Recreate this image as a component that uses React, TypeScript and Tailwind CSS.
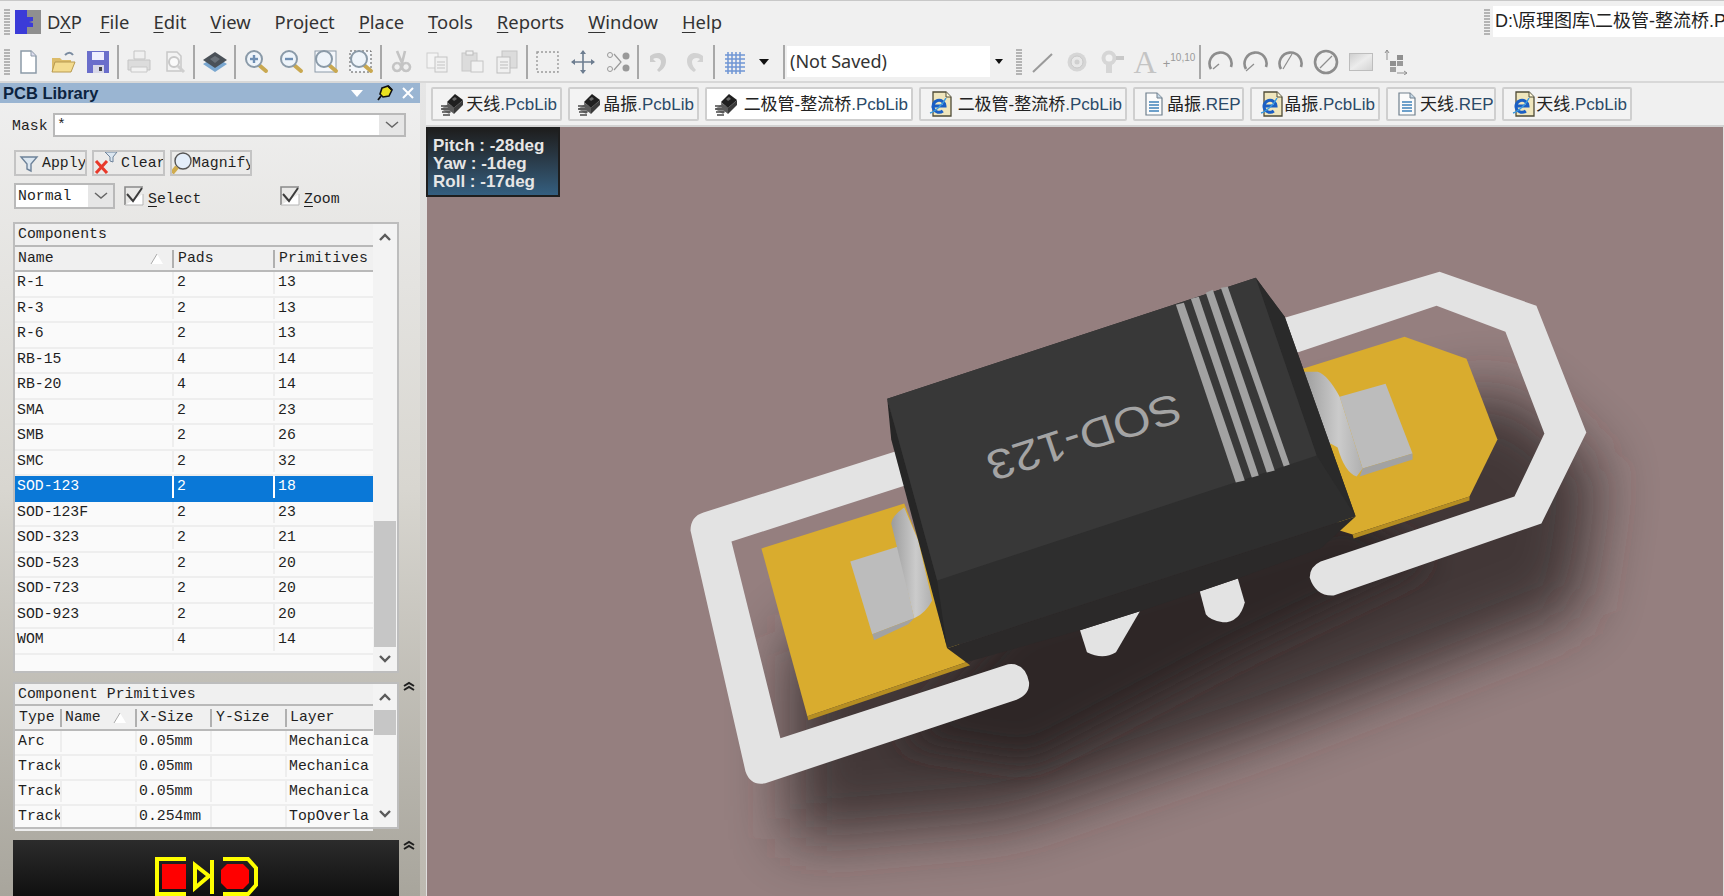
import React from 'react';

const MONO = "font-['Liberation_Mono',monospace] text-[14.8px] leading-none text-[#1f1f1f]";

const Grip = () => (
  <div className="w-[6px] h-[26px] flex flex-col gap-[1px] shrink-0">
    {Array.from({ length: 9 }).map((_, i) => (
      <div key={i} className="h-[2px] bg-[#b4b4b4]" />
    ))}
  </div>
);

const Sep = () => <div className="w-[2px] h-[34px] bg-[#a8a8a8] shrink-0 mx-[2px]" />;

const Ico: React.FC<{ children: React.ReactNode }> = ({ children }) => (
  <svg width="26" height="26" viewBox="0 0 26 26" className="shrink-0">
    {children}
  </svg>
);

const Slot: React.FC<{ children: React.ReactNode }> = ({ children }) => (
  <div className="w-[35px] h-[30px] flex items-center justify-center shrink-0">{children}</div>
);

const Glass: React.FC<{ sign?: 'plus' | 'minus' }> = ({ sign }) => (
  <g>
    <path d="M16 16l7 6" stroke="#c9a850" strokeWidth="4" strokeLinecap="round" />
    <circle cx="11" cy="10" r="8" fill="#eef4fa" stroke="#8a9aa8" strokeWidth="2" />
    {sign && <path d="M7 10h8" stroke="#6f8fb4" strokeWidth="2.4" />}
    {sign === 'plus' && <path d="M11 6v8" stroke="#6f8fb4" strokeWidth="2.4" />}
  </g>
);

const PageGray = () => <path d="M6 3h10l4 4v15H6z" fill="#f3f3f3" stroke="#c8c8c8" strokeWidth="1.5" />;

const ChipIcon = () => (
  <svg width="26" height="26" viewBox="0 0 26 26" className="shrink-0">
    <path d="M2 18l7-5 8 4-7 6z" fill="#8a8a8a" />
    <path d="M2 15h8M2 18h9M3 21h8M4 24h7" stroke="#4a4a4a" strokeWidth="1.5" />
    <path d="M8 11l8-8 8 6-9 8z" fill="#1f1f1f" />
    <path d="M8 11l7 6v6l-6-5z" fill="#5a5a5a" />
    <path d="M15 17l9-8v5l-9 9z" fill="#3a3a3a" />
    <path d="M13 8l3-2 2 2-3 2z" fill="#6a6a6a" />
  </svg>
);

const DocIcon = () => (
  <svg width="26" height="26" viewBox="0 0 26 26" className="shrink-0">
    <path d="M5 2h11l5 5v17H5z" fill="#fbfbfb" stroke="#70808e" strokeWidth="1.2" />
    <path d="M8 11h10M8 14h10M8 17h10M8 20h10" stroke="#3f83bb" strokeWidth="1.4" />
    <path d="M16 2v5h5" fill="#c6d8e6" stroke="#70808e" />
  </svg>
);

const IeIcon = () => (
  <svg width="26" height="26" viewBox="0 0 26 26" className="shrink-0">
    <path d="M6 1h13l5 5v19H6z" fill="#efe6bd" stroke="#4f4c38" strokeWidth="1.3" />
    <path d="M19 1v5h5" fill="#fff8d8" stroke="#4f4c38" />
    <path d="M7 15h11a6 6 0 1 0 -2.2 5" fill="none" stroke="#1b5fc4" strokeWidth="3" />
    <path d="M3 22c4-1 13-8 16-15" stroke="#3a9be0" strokeWidth="1.4" fill="none" />
  </svg>
);

const Tab: React.FC<{ icon: React.ReactNode; name: string; ext: string; active?: boolean; w: string }> = ({ icon, name, ext, active, w }) => (
  <div className={`${w} h-[34px] flex items-center justify-between pl-[6px] pr-[3px] rounded-[2px] border-2 border-[#cfcfcf] shrink-0 ${active ? 'bg-white' : 'bg-[#f3f3f3]'}`}>
    {icon}
    <span className="mt-[2px] font-['Liberation_Sans','Noto_Sans_CJK_SC',sans-serif] text-[17px] text-[#222] whitespace-nowrap">
      {name}
      <span className="text-[#2c4a68]">{ext}</span>
    </span>
  </div>
);

const U: React.FC<{ children: React.ReactNode }> = ({ children }) => (
  <span className="underline underline-offset-[3px]">{children}</span>
);

const Chevron: React.FC<{ down?: boolean }> = ({ down }) => (
  <svg width="14" height="10" viewBox="0 0 14 10">
    <path d={down ? 'M2 2l5 5 5-5' : 'M2 8l5-5 5 5'} fill="none" stroke="#5a5a5a" strokeWidth="2.4" />
  </svg>
);

const DoubleUp = () => (
  <svg width="14" height="11" viewBox="0 0 14 11">
    <path d="M2 5l5-3 5 3M2 9l5-3 5 3" fill="none" stroke="#1f1f1f" strokeWidth="2" />
  </svg>
);

const Combo: React.FC<{ w: string }> = ({ w }) => (
  <div className={`${w} h-full bg-[#e6e6e6] flex items-center justify-center shrink-0`}>
    <svg width="14" height="8" viewBox="0 0 14 8">
      <path d="M1 1l6 5 6-5" fill="none" stroke="#666" strokeWidth="1.5" />
    </svg>
  </div>
);

const Check = () => (
  <svg width="20" height="20" viewBox="0 0 20 20" className="shrink-0">
    <path d="M1 19V1h18" fill="none" stroke="#8a8a8a" strokeWidth="1.6" />
    <path d="M1 19h18V8" fill="#fff" stroke="#b5b5b5" strokeWidth="1" />
    <path d="M3 8l6 7 9-13" fill="none" stroke="#3c3c3c" strokeWidth="2" />
  </svg>
);

const components = [
  ['R-1', '2', '13'], ['R-3', '2', '13'], ['R-6', '2', '13'], ['RB-15', '4', '14'], ['RB-20', '4', '14'],
  ['SMA', '2', '23'], ['SMB', '2', '26'], ['SMC', '2', '32'], ['SOD-123', '2', '18'], ['SOD-123F', '2', '23'],
  ['SOD-323', '2', '21'], ['SOD-523', '2', '20'], ['SOD-723', '2', '20'], ['SOD-923', '2', '20'], ['WOM', '4', '14'],
];

const primitives = [
  ['Arc', '', '0.05mm', '', 'Mechanica'],
  ['Track', '', '0.05mm', '', 'Mechanica'],
  ['Track', '', '0.05mm', '', 'Mechanica'],
  ['Track', '', '0.254mm', '', 'TopOverla'],
];

const SortMark = () => (
  <svg width="14" height="12" viewBox="0 0 14 12" className="shrink-0">
    <path d="M7 1L1 11h12z" fill="#fff" />
    <path d="M7 1L1 11" stroke="#aaa" />
  </svg>
);

const Canvas3D = () => (
  <svg viewBox="426 126 1298 770" className="block w-full h-full">
    <defs>
      <filter id="s1" x="-30%" y="-30%" width="160%" height="160%"><feGaussianBlur stdDeviation="30" /></filter>
      <filter id="s2" x="-30%" y="-30%" width="160%" height="160%"><feGaussianBlur stdDeviation="16" /></filter>
      <linearGradient id="bend" x1="0" y1="0" x2="1" y2="0">
        <stop offset="0" stopColor="#9c9c9c" />
        <stop offset="0.6" stopColor="#cbcbcb" />
        <stop offset="1" stopColor="#b0b0b0" />
      </linearGradient>
    </defs>
    <rect x="426" y="126" width="1298" height="770" fill="#957f7f" />
    {/* shadow */}
    <polygon points="790,840 790,640 1340,420 1510,390 1600,470 1580,610 1270,730 1010,820" fill="#2f2727" opacity="0.8" filter="url(#s1)" />
    <polygon points="900,740 1010,620 1350,510 1430,560 1240,650 1030,760" fill="#2f2727" filter="url(#s2)" />
    {/* gold pads */}
    <polygon points="1303,368 1405,336 1467,358 1498,439 1470,496 1353,534 1340,530" fill="#d9ac2e" />
    <polygon points="1470,496 1353,534 1354,538 1470,500" fill="#b58d22" />
    <polygon points="761,548 904,503 966,662 807,716" fill="#d9ac2e" />
    <polygon points="966,662 807,716 808,720 970,665" fill="#b58d22" />
    {/* silkscreen */}
    <path
      d="M1285,317 L1440,271 L1537,305 L1587,432 L1542,523 L1334,595 Q1316,596 1310,577 Q1310,566 1321,561 L1515,496 L1545,433 L1506,331 L1437,305 L1297,352 Z"
      fill="#e3e3e3"
    />
    <path
      d="M895,451 L703,512 Q690,516 690,530 L745,771 Q750,786 765,783 L1015,700 Q1030,695 1029,682 Q1025,662 1008,664 L780,738 L731,541 L905,485 Z"
      fill="#e3e3e3"
    />
    <path d="M1200,591 L1238,578 L1245,602 Q1240,622 1223,622 Q1210,620 1206,614 Z" fill="#e3e3e3" />
    <path d="M1080,630 L1140,611 L1116,652 Q1103,660 1087,652 Z" fill="#e3e3e3" />
    {/* right lead */}
    <polygon points="1340,396 1386,383 1413,453 1363,468" fill="#bcbcbc" />
    <polygon points="1363,468 1413,453 1413,459 1360,476" fill="#a2a2a2" />
    <path d="M1303,371 L1318,371 Q1328,374 1340,396 L1363,468 L1357,476 Q1345,472 1338,447 Q1328,440 1315,440 Z" fill="url(#bend)" />
    {/* left lead */}
    <polygon points="850,561 898,546 914,618 872,634" fill="#bcbcbc" />
    <polygon points="872,634 914,618 908,624 874,640" fill="#a2a2a2" />
    <path d="M904,507 Q892,515 891,523 L908,593 L914,618 Q926,612 932,600 L918,540 Z" fill="url(#bend)" />
    {/* body */}
    <polygon points="947,648 966,662 1080,630 1140,611 1238,578 1321,548 1356,516" fill="#2b2929" />
    <polygon points="887,398 1256,277 1285,316 1356,516 947,648" fill="#2e2e2e" />
    <polygon points="887,398 891,439 947,648 937,580" fill="#262626" />
    <polygon points="1256,277 1285,316 1356,516 1317,455" fill="#2a2a2a" />
    <polygon points="887,398 1256,277 1317,455 937,580" fill="#383838" />
    {/* stripes */}
    <polygon points="1176,304 1184,302 1245,480 1236,482" fill="#a2a2a2" />
    <polygon points="1191,298 1199,296 1259,475 1252,477" fill="#a2a2a2" />
    <polygon points="1206,292 1213,289 1275,470 1267,472" fill="#a2a2a2" />
    <polygon points="1221,287 1228,286 1290,464 1284,466" fill="#a2a2a2" />
    <text
      transform="matrix(-1.1 0.35 -0.32 -0.95 1176 392)"
      fontFamily="'Liberation Sans', sans-serif"
      fontSize="42"
      fill="#a4a4a4"
    >
      SOD-123
    </text>
  </svg>
);

const App: React.FC = () => {
  return (
    <div className="w-[1724px] h-[896px] overflow-hidden flex flex-col bg-[#f0f0f0] border-t border-[#c8c8c8]">
      {/* menu bar */}
      <div className="h-[41px] flex items-center shrink-0 relative">
        <div className="ml-[4px] shrink-0"><Grip /></div>
        <svg width="26" height="24" viewBox="0 0 26 24" className="ml-[5px] shrink-0">
          <rect x="12" y="0" width="14" height="24" fill="#8f8f8f" />
          <path d="M0 0h12v7h6v4l-4 1 4 1v4h-6v7H0z" fill="#3b3bd8" />
        </svg>
        <div className="ml-[6px] flex items-center gap-[24px] font-['Noto_Sans',sans-serif] text-[18.4px] text-[#333]">
          <span className="-mr-[6px]">D<U>X</U>P</span>
          <span><U>F</U>ile</span>
          <span><U>E</U>dit</span>
          <span><U>V</U>iew</span>
          <span>Proje<U>c</U>t</span>
          <span><U>P</U>lace</span>
          <span><U>T</U>ools</span>
          <span><U>R</U>eports</span>
          <span><U>W</U>indow</span>
          <span><U>H</U>elp</span>
        </div>
        <div className="absolute left-[1484px] top-[5px] h-[31px] w-[240px] flex items-center">
          <Grip />
          <div className="ml-[3px] pl-[2px] h-full flex-1 bg-white flex items-center overflow-hidden font-['Liberation_Sans','Noto_Sans_CJK_SC',sans-serif] text-[18px] text-[#222] whitespace-nowrap">
            D:\原理图库\二极管-整流桥.PcbLib
          </div>
        </div>
      </div>

      {/* toolbar */}
      <div className="h-[41px] flex items-center shrink-0 border-b-2 border-[#d8d8d8] pl-[4px]">
        <Grip />
        <div className="flex items-center">
          <Slot><Ico><path d="M6 2h10l5 5v17H6z" fill="#fff" stroke="#8c9aa8" strokeWidth="1.5" /><path d="M16 2v5h5" fill="#dde" stroke="#8c9aa8" /></Ico></Slot>
          <Slot><Ico><path d="M2 9h8l2 2h9v12H2z" fill="#dcbc6a" /><path d="M5 13h20l-4 10H2z" fill="#f4dc90" stroke="#b89a50" /><path d="M15 6c3-3 6-3 8 0" stroke="#7a8ba0" strokeWidth="2" fill="none" /></Ico></Slot>
          <Slot><Ico><rect x="2" y="2" width="22" height="22" fill="#6a6ecb" /><rect x="7" y="3" width="12" height="8" fill="#eef" /><rect x="8" y="16" width="11" height="8" fill="#d8d8e8" /><rect x="14" y="18" width="3" height="4" fill="#444" /></Ico></Slot>
          <Sep />
          <Slot><Ico><path d="M8 2h11v8H8z" fill="#f0f0f0" stroke="#c4c4c4" /><path d="M2 11h22v10H2z" fill="#dcdcdc" stroke="#c4c4c4" /><path d="M5 18h16v5H5z" fill="#f2f2f2" stroke="#c8c8c8" /></Ico></Slot>
          <Slot><Ico><PageGray /><circle cx="13" cy="13" r="5" fill="#fafafa" stroke="#c8c8c8" strokeWidth="2" /><path d="M17 17l6 6" stroke="#cfcfcf" strokeWidth="3" /></Ico></Slot>
          <Sep />
          <Slot><Ico><path d="M1 15l12-7 12 7-12 8z" fill="#7aa7d0" /><path d="M1 11l12-8 12 8-12 8z" fill="#4a5158" /><path d="M8 10l5-3 5 3-5 4z" fill="#6a727a" /></Ico></Slot>
          <Sep />
          <Slot><Ico><Glass sign="plus" /></Ico></Slot>
          <Slot><Ico><Glass sign="minus" /></Ico></Slot>
          <Slot><Ico><rect x="2" y="2" width="21" height="21" fill="#f4f7fb" stroke="#8c9aa8" /><Glass /></Ico></Slot>
          <Slot><Ico><rect x="2" y="2" width="21" height="21" fill="#f4f7fb" stroke="#555" strokeDasharray="2 2" /><Glass /></Ico></Slot>
          <Sep />
          <Slot><Ico><path d="M9 2l5 12 3-12M9 14a4 4 0 1 0 .1 0M18 14a4 4 0 1 0 .1 0" transform="translate(-1 0)" fill="none" stroke="#c4c4c4" strokeWidth="2.6" /></Ico></Slot>
          <Slot><Ico><rect x="3" y="4" width="11" height="15" fill="#f4f4f4" stroke="#cdcdcd" /><rect x="11" y="8" width="12" height="15" fill="#f0f0f0" stroke="#c4c4c4" /><path d="M13 13h8M13 16h8M13 19h8" stroke="#c4c4c4" /></Ico></Slot>
          <Slot><Ico><rect x="3" y="4" width="15" height="18" fill="#dcdcdc" stroke="#c8c8c8" /><rect x="7" y="2" width="7" height="4" fill="#f0f0f0" stroke="#bcbcbc" /><rect x="12" y="12" width="12" height="11" fill="#f2f2f2" stroke="#c4c4c4" /></Ico></Slot>
          <Slot><Ico><rect x="8" y="2" width="15" height="17" fill="#dcdcdc" stroke="#c4c4c4" /><rect x="3" y="8" width="13" height="16" fill="#f0f0f0" stroke="#bdbdbd" /><path d="M6 13h8M6 16h8M6 19h8" stroke="#bdbdbd" /></Ico></Slot>
          <Sep />
          <Slot><Ico><rect x="2" y="3" width="21" height="20" fill="none" stroke="#9a9a9a" strokeWidth="1.4" strokeDasharray="2 2" /></Ico></Slot>
          <Slot><Ico><path d="M13 2v22M2 13h22" stroke="#6d7d90" strokeWidth="1.6" /><path d="M13 1l-3 4h6zM13 25l-3-4h6zM1 13l4-3v6zM25 13l-4-3v6z" fill="#6d7d90" /></Ico></Slot>
          <Slot><Ico><circle cx="5" cy="6" r="2.5" fill="none" stroke="#999" /><circle cx="5" cy="20" r="2.5" fill="none" stroke="#999" /><circle cx="21" cy="7" r="3.5" fill="#999" /><circle cx="21" cy="19" r="3.5" fill="#999" /><path d="M9 5l7 8-7 8" fill="none" stroke="#999" strokeWidth="1.2" /></Ico></Slot>
          <Sep />
          <Slot><Ico><path d="M4 7c6-5 16-4 16 5 0 6-4 9-7 11l-2-2c2-2 4-5 4-8 0-4-5-5-8-3l3 3H4z" fill="#cdcdcd" /></Ico></Slot>
          <Slot><Ico><path d="M22 7c-6-5-16-4-16 5 0 6 4 9 7 11l2-2c-2-2-4-5-4-8 0-4 5-5 8-3l-3 3h6z" fill="#d2d2d2" /></Ico></Slot>
          <Sep />
          <Slot><Ico><path d="M3 6h20M3 10h20M3 14h20M3 18h20M3 22h20M6 3v22M10 3v22M14 3v22M18 3v22" stroke="#6f95d4" strokeWidth="1.5" /></Ico></Slot>
          <div className="w-[15px] ml-[4px] mr-[10px] flex justify-center shrink-0">
            <div className="w-0 h-0 border-l-[5px] border-r-[5px] border-t-[6px] border-l-transparent border-r-transparent border-t-[#111]" />
          </div>
          <Sep />
        </div>
        <div className="w-[221px] h-[31px] bg-white flex items-center shrink-0 font-['Noto_Sans',sans-serif] text-[18px] text-[#333] pl-[3px]">
          <span className="flex-1">(Not Saved)</span>
          <div className="w-[18px] h-full bg-[#f0f0f0] flex items-center justify-center">
            <div className="w-0 h-0 border-l-[4px] border-r-[4px] border-t-[5px] border-l-transparent border-r-transparent border-t-[#111]" />
          </div>
        </div>
        <div className="ml-[8px]"><Grip /></div>
        <div className="flex items-center ml-[2px]">
          <Slot><Ico><path d="M4 23L23 5" stroke="#9a9a9a" strokeWidth="2" /></Ico></Slot>
          <Slot><Ico><circle cx="13" cy="13" r="9.5" fill="#d6d6d6" /><circle cx="13" cy="13" r="6" fill="#e8e8e8" stroke="#c8c8c8" /><circle cx="13" cy="13" r="2.5" fill="#d0d0d0" /></Ico></Slot>
          <Slot><Ico><circle cx="10" cy="9" r="7.5" fill="#d6d6d6" /><circle cx="10" cy="9" r="3.5" fill="#f2f2f2" /><path d="M7 15h6v9H7z" fill="#d6d6d6" /><path d="M17 7h8v4h-8z" fill="#c8c8c8" /></Ico></Slot>
          <div className="w-[32px] flex justify-center shrink-0 font-['Liberation_Serif',serif] text-[32px] leading-none text-[#c4c4c4]">A</div>
          <div className="w-[36px] flex justify-center items-end shrink-0 font-['Liberation_Sans',sans-serif] text-[#9a9a9a] leading-none">
            <span className="text-[13px]">+</span>
            <span className="text-[10px] mb-[7px]">10,10</span>
          </div>
          <Sep />
          <div className="flex items-center">
            <Slot><Ico><path d="M3 20a11 11 0 1 1 20 -2" fill="none" stroke="#8d8d8d" strokeWidth="2.6" /><path d="M5 20l6-5" stroke="#8d8d8d" strokeWidth="1.4" /></Ico></Slot>
            <Slot><Ico><path d="M3 20a11 11 0 1 1 20 -2" fill="none" stroke="#8d8d8d" strokeWidth="2.6" /><path d="M3 22l8-7" stroke="#8d8d8d" strokeWidth="1.2" /></Ico></Slot>
            <Slot><Ico><path d="M3 20a11 11 0 1 1 20 -2" fill="none" stroke="#8d8d8d" strokeWidth="2.6" /><path d="M5 20l9-15" stroke="#8d8d8d" strokeWidth="1.2" /></Ico></Slot>
            <Slot><Ico><circle cx="13" cy="13" r="11" fill="none" stroke="#8d8d8d" strokeWidth="2.6" /><path d="M7 19l12-12" stroke="#8d8d8d" strokeWidth="1.2" /></Ico></Slot>
            <Slot><div className="w-[24px] h-[18px] bg-gradient-to-br from-[#cfcfcf] via-[#ececec] to-[#d4d4d4] border border-[#bdbdbd]" /></Slot>
            <Slot><Ico><rect x="7" y="12" width="6" height="5" fill="#8f8f8f" /><rect x="14" y="6" width="6" height="5" fill="#8f8f8f" /><rect x="14" y="12" width="6" height="5" fill="#999" /><rect x="7" y="18" width="6" height="5" fill="#9f9f9f" /><path d="M4 1v10M2 4l2-3 2 3M14 24h10M21 22l3 2-3 2" stroke="#8f8f8f" fill="none" /></Ico></Slot>
          </div>
        </div>
      </div>

      {/* body */}
      <div className="flex-1 flex min-h-0">
        {/* PCB Library panel */}
        <div className="w-[420px] shrink-0 flex flex-col bg-gradient-to-b from-[#f0f0f0] via-[#d8d6d0] to-[#a8a59c] overflow-hidden">
          <div className="h-[20px] shrink-0 bg-[#9ab5d2] flex items-center pl-[3px] pr-[5px]">
            <span className="font-['Liberation_Sans',sans-serif] font-bold text-[16.5px] leading-none text-[#0c2340] flex-1 mt-[1px]">PCB Library</span>
            <div className="w-0 h-0 border-l-[6px] border-r-[6px] border-t-[7px] border-l-transparent border-r-transparent border-t-white" />
            <svg width="16" height="16" viewBox="0 0 16 16" className="ml-[14px]">
              <path d="M5 3l6-2 4 4-3 6-6 1-3-3z" fill="#e8e020" stroke="#111" strokeWidth="1.6" />
              <path d="M4 11l-3 4M11 1l4 4" stroke="#111" strokeWidth="1.8" />
            </svg>
            <svg width="14" height="14" viewBox="0 0 14 14" className="ml-[8px]">
              <path d="M2 2l10 10M12 2L2 12" stroke="#fff" strokeWidth="2" />
            </svg>
          </div>

          <div className="pl-[13px] flex flex-col">
            {/* mask */}
            <div className="mt-[10px] h-[24px] flex items-center">
              <span className={`${MONO} w-[40px] -ml-[1px] mr-[1px] mt-[3px]`}>Mask</span>
              <div className="w-[353px] h-full flex border-2 border-[#b9b9b9]">
                <div className={`${MONO} flex-1 bg-white pl-[2px] pt-[3px]`}>*</div>
                <Combo w="w-[25px]" />
              </div>
            </div>

            {/* buttons */}
            <div className="mt-[13px] h-[26px] flex gap-[5px] ml-[1px]">
              <div className="w-[73px] h-full border-2 border-[#c4c4c4] flex items-center overflow-hidden">
                <svg width="22" height="20" viewBox="0 0 22 20" className="shrink-0 ml-[2px]">
                  <path d="M3 4h16l-6 7v7l-4-2v-5z" fill="#dbe6f0" stroke="#6d8299" strokeWidth="1.4" />
                </svg>
                <span className={`${MONO} ml-[2px]`}>Apply</span>
              </div>
              <div className="w-[73px] h-full border-2 border-[#c4c4c4] flex items-center overflow-hidden">
                <svg width="28" height="24" viewBox="0 0 28 24" className="shrink-0">
                  <path d="M11 1h12l-4 5v5l-3-1V6z" fill="#dbe6f0" stroke="#6d8299" />
                  <path d="M2 10l11 12M13 10L2 22" stroke="#e8392a" strokeWidth="3" />
                </svg>
                <span className={`${MONO} -ml-[1px]`}>Clear</span>
              </div>
              <div className="w-[82px] h-full border-2 border-[#c4c4c4] flex items-center overflow-hidden">
                <svg width="22" height="24" viewBox="0 0 22 24" className="shrink-0 -ml-[2px]">
                  <circle cx="13" cy="10" r="8" fill="#e4eefa" stroke="#555" strokeWidth="1.4" />
                  <path d="M7 16l-5 6" stroke="#d0ac4e" strokeWidth="4.5" />
                </svg>
                <span className={MONO}>Magnify</span>
              </div>
            </div>

            {/* normal + checks */}
            <div className="mt-[7px] h-[26px] flex items-center ml-[1px]">
              <div className="w-[101px] h-full flex border-2 border-[#b9b9b9] shrink-0">
                <div className={`${MONO} flex-1 bg-white pl-[2px] pt-[4px]`}>Normal</div>
                <Combo w="w-[25px]" />
              </div>
              <div className="ml-[9px]"><Check /></div>
              <span className={`${MONO} ml-[4px] mt-[6px] w-[132px]`}><U>S</U>elect</span>
              <Check />
              <span className={`${MONO} ml-[4px] mt-[6px]`}><U>Z</U>oom</span>
            </div>

            {/* components table */}
            <div className="mt-[13px] w-[386px] h-[451px] flex border-2 border-[#bdbdbd] bg-[#fafafa] shrink-0">
              <div className="w-[358px] flex flex-col shrink-0">
                <div className={`${MONO} h-[23px] bg-[#f0f0f0] border-b-2 border-[#b9b9b9] flex items-center pl-[3px] shrink-0`}>Components</div>
                <div className="h-[25px] shrink-0 bg-[#f0f0f0] border-b-2 border-[#b9b9b9] flex items-center">
                  <div className={`${MONO} w-[159px] pl-[3px] flex items-center justify-between pr-[8px] border-r-2 border-[#b0b0b0] h-[18px] shrink-0`}>Name<SortMark /></div>
                  <div className={`${MONO} w-[101px] pl-[4px] border-r-2 border-[#b0b0b0] h-[18px] flex items-center shrink-0`}>Pads</div>
                  <div className={`${MONO} flex-1 pl-[4px] whitespace-nowrap`}>Primitives</div>
                </div>
                {components.map((c) => {
                  const sel = c[0] === 'SOD-123';
                  return (
                    <div key={c[0]} className={`h-[25.5px] shrink-0 flex items-center border-b-2 pb-[2px] ${sel ? 'bg-[#0a78d7] border-[#0a78d7]' : 'border-[#eeeeee]'}`}>
                      <div className={`${MONO} w-[159px] h-full flex items-center pl-[2px] border-r-2 shrink-0 ${sel ? 'border-white !text-white' : 'border-[#eeeeee]'}`}>{c[0]}</div>
                      <div className={`${MONO} w-[101px] h-full flex items-center pl-[3px] border-r-2 shrink-0 ${sel ? 'border-white !text-white' : 'border-[#eeeeee]'}`}>{c[1]}</div>
                      <div className={`${MONO} flex-1 h-full flex items-center pl-[3px] ${sel ? '!text-white' : ''}`}>{c[2]}</div>
                    </div>
                  );
                })}
              </div>
              <div className="flex-1 flex flex-col items-center bg-[#f3f3f3]">
                <div className="h-[26px] flex items-center"><Chevron /></div>
                <div className="flex-1 w-full flex flex-col justify-end">
                  <div className="h-[126px] w-[22px] mx-auto bg-[#c6c6c6]" />
                </div>
                <div className="h-[24px] flex items-center"><Chevron down /></div>
              </div>
            </div>

            {/* primitives table */}
            <div className="mt-[9px] flex items-start shrink-0">
              <div className="w-[386px] h-[147px] flex border-2 border-[#bdbdbd] bg-[#fafafa] shrink-0">
                <div className="w-[358px] flex flex-col shrink-0">
                  <div className={`${MONO} h-[22px] bg-[#f0f0f0] border-b-2 border-[#b9b9b9] flex items-center pl-[3px] shrink-0`}>Component Primitives</div>
                  <div className="h-[25px] shrink-0 bg-[#f0f0f0] border-b-2 border-[#b9b9b9] flex items-center">
                    <div className={`${MONO} w-[47px] pl-[4px] border-r-2 border-[#b0b0b0] h-[18px] flex items-center shrink-0`}>Type</div>
                    <div className={`${MONO} w-[75px] pl-[3px] border-r-2 border-[#b0b0b0] h-[18px] flex items-center justify-between pr-[8px] shrink-0`}>Name<SortMark /></div>
                    <div className={`${MONO} w-[75px] pl-[3px] border-r-2 border-[#b0b0b0] h-[18px] flex items-center shrink-0`}>X-Size</div>
                    <div className={`${MONO} w-[75px] pl-[4px] border-r-2 border-[#b0b0b0] h-[18px] flex items-center shrink-0`}>Y-Size</div>
                    <div className={`${MONO} flex-1 pl-[3px]`}>Layer</div>
                  </div>
                  {primitives.map((p, i) => (
                    <div key={i} className="h-[25px] shrink-0 flex items-center border-b-2 border-[#eeeeee] pb-[2px]">
                      <div className={`${MONO} w-[47px] h-full flex items-center pl-[3px] border-r-2 border-[#eeeeee] overflow-hidden whitespace-nowrap shrink-0`}>{p[0]}</div>
                      <div className="w-[75px] h-full border-r-2 border-[#eeeeee] shrink-0" />
                      <div className={`${MONO} w-[75px] h-full flex items-center pl-[2px] border-r-2 border-[#eeeeee] shrink-0`}>{p[2]}</div>
                      <div className="w-[75px] h-full border-r-2 border-[#eeeeee] shrink-0" />
                      <div className={`${MONO} flex-1 h-full flex items-center pl-[2px] overflow-hidden whitespace-nowrap`}>{p[4]}</div>
                    </div>
                  ))}
                </div>
                <div className="flex-1 flex flex-col items-center bg-[#f3f3f3]">
                  <div className="h-[26px] flex items-center"><Chevron /></div>
                  <div className="flex-1 w-full">
                    <div className="h-[25px] w-[22px] mx-auto bg-[#c6c6c6]" />
                  </div>
                  <div className="h-[26px] flex items-center"><Chevron down /></div>
                </div>
              </div>
              <div className="ml-[3px] -mt-[1px]"><DoubleUp /></div>
            </div>

            {/* preview */}
            <div className="mt-[11px] flex items-start shrink-0">
              <div className="w-[386px] h-[60px] bg-gradient-to-b from-[#2c2c2c] to-[#0e0e0e] shrink-0 flex justify-center pt-[17px]">
                <svg width="104" height="40" viewBox="0 0 104 40" className="shrink-0">
                  <rect x="8" y="7" width="24" height="25" fill="#ff0000" />
                  <path d="M32 2H3v35h29" fill="none" stroke="#ffff00" strokeWidth="4" />
                  <path d="M41 8l14 11-14 12z" fill="none" stroke="#ffff00" strokeWidth="4" />
                  <path d="M58 3v34" stroke="#ffff00" strokeWidth="4" />
                  <path d="M73 7h16l6 6v13l-6 6H73l-6-6V13z" fill="#ff0000" />
                  <path d="M69 2h25l8 9v17l-8 9H69" fill="none" stroke="#ffff00" strokeWidth="4" />
                </svg>
              </div>
              <div className="ml-[3px]"><DoubleUp /></div>
            </div>
          </div>
        </div>

        {/* divider */}
        <div className="w-[6px] shrink-0 bg-gradient-to-b from-[#e6e6e6] to-[#bdb9b0]" />

        {/* documents */}
        <div className="flex-1 min-w-0 flex flex-col">
          <div className="h-[44px] shrink-0 flex items-center gap-[6px] pl-[5px] border-b-2 border-[#d2d2d2]">
            <Tab w="w-[131px]" icon={<ChipIcon />} name="天线" ext=".PcbLib" />
            <Tab w="w-[131px]" icon={<ChipIcon />} name="晶振" ext=".PcbLib" />
            <Tab w="w-[208px]" icon={<ChipIcon />} name="二极管-整流桥" ext=".PcbLib" active />
            <Tab w="w-[208px]" icon={<IeIcon />} name="二极管-整流桥" ext=".PcbLib" />
            <Tab w="w-[111px]" icon={<DocIcon />} name="晶振" ext=".REP" />
            <Tab w="w-[130px]" icon={<IeIcon />} name="晶振" ext=".PcbLib" />
            <Tab w="w-[110px]" icon={<DocIcon />} name="天线" ext=".REP" />
            <Tab w="w-[130px]" icon={<IeIcon />} name="天线" ext=".PcbLib" />
          </div>
          <div className="flex-1 relative overflow-hidden">
            <Canvas3D />
            <div className="absolute left-0 top-0 w-[134px] h-[70px] bg-gradient-to-b from-[#1e1e1e] to-[#345f80] border-2 border-[#1e1e1e] pl-[5px] pt-[8px] font-['Liberation_Sans',sans-serif] font-bold text-[17px] leading-[18px] text-[#e6e6e6] whitespace-nowrap">
              <div>Pitch : -28deg</div>
              <div>Yaw : -1deg</div>
              <div>Roll : -17deg</div>
            </div>
          </div>
        </div>
      </div>
    </div>
  );
};

export default App;
